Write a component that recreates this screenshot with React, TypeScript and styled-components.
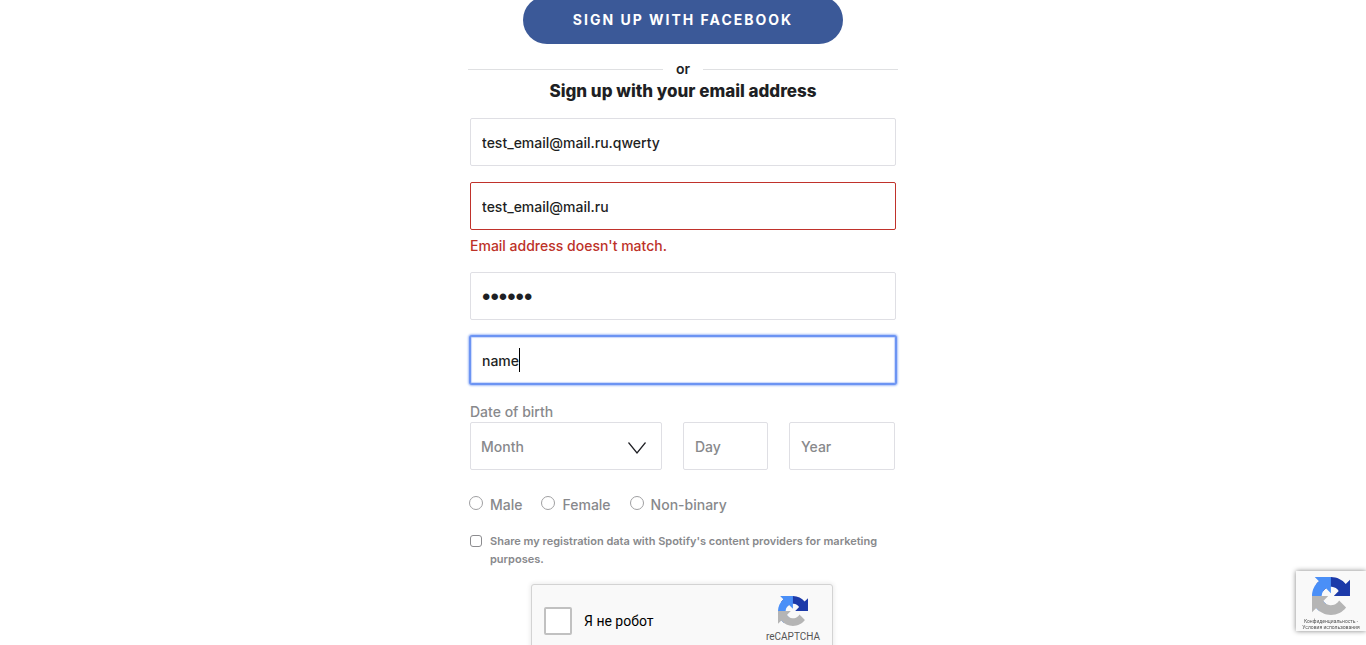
import React from "react";
import styled, { createGlobalStyle, css } from "styled-components";

const GlobalStyle = createGlobalStyle`
  *, *::before, *::after { box-sizing: border-box; }
  body {
    margin: 0;
    background: #fff;
    color: #1e1f24;
    font-family: Inter, "Noto Sans", sans-serif;
    font-size: 14px;
  }
`;

const Page = styled.main`
  display: flex;
  justify-content: center;
  height: 100vh;
  overflow: hidden;
`;

const Column = styled.div`
  display: flex;
  flex-direction: column;
  flex: 0 1 430px;
  margin-top: -4px;
`;

const FacebookButton = styled.button`
  align-self: center;
  flex: none;
  width: 320px;
  max-width: 100%;
  height: 48px;
  border: 0;
  border-radius: 24px;
  background: #3b5998;
  color: #fff;
  font: 700 14px/20px Inter, sans-serif;
  letter-spacing: 2px;
  text-transform: uppercase;
`;

const Divider = styled.div`
  display: flex;
  align-items: center;
  gap: 13px;
  margin-top: 15px;
  font: 600 14px/20px Inter, sans-serif;

  &::before, &::after {
    content: "";
    flex: 1;
    height: 1px;
    background: #dfe0e2;
  }
`;

const Title = styled.h1`
  margin: 0;
  font: 800 17px/24px Inter, sans-serif;
  text-align: center;
`;

const Form = styled.form`
  display: flex;
  flex-direction: column;
  gap: 16px;
  margin-top: 15px;
  padding: 0 2px;
`;

const box = css`
  width: 100%;
  height: 48px;
  border: 1px solid #dfdfe4;
  border-radius: 2px;
  background: #fff;
  padding: 0 11px;
  font: 500 14px/24px Inter, sans-serif;
  outline: 0;
`;

const Field = styled.div`
  position: relative;
`;

const TextInput = styled.input<{ $state?: "error" | "focused" }>`
  ${box}
  display: block;
  color: #1e1f24;

  &::placeholder { color: #88898c; opacity: 1; }

  &[type="password"] {
    padding-top: 2px;
    font-family: "Liberation Sans", sans-serif;
    font-size: 24px;
  }

  ${({ $state }) => $state === "error" && css`border-color: #c0322b;`}
  ${({ $state }) => $state === "focused" && css`
    border-color: #6c94f3;
    box-shadow: 0 0 0 1px #6c94f3, 0 0 2px 2px #a9c0f8, inset 0 0 1px 1px #c9d7fb;
  `}
`;

const Caret = styled.span`
  position: absolute;
  top: 12px;
  left: 49px;
  width: 1px;
  height: 24px;
  background: #000;
`;

const ErrorText = styled.p`
  margin: 4px 0 -2px;
  color: #bd3228;
  font: 500 14px/24px Inter, sans-serif;
`;

const DateGroup = styled.fieldset`
  margin: 3px 0 0;
  padding: 0;
  border: 0;
  min-width: 0;
`;

const Legend = styled.legend`
  padding: 0 0 1px;
  color: #88898c;
  font: 500 14px/18px Inter, sans-serif;
`;

const DateRow = styled.div`
  display: grid;
  grid-template-columns: 192fr 85fr 106fr;
  gap: 21px;
  padding-right: 1px;
`;

const MonthSelect = styled.select`
  ${box}
  appearance: none;
  padding: 2px 10px 0;
  color: #88898c;
`;

const Chevron = styled.svg`
  position: absolute;
  top: 20px;
  right: 16px;
  pointer-events: none;
`;

const RadioGroup = styled.div`
  display: flex;
  gap: 19px;
  margin: 8px 0 0 -1px;
`;

const ChoiceLabel = styled.label<{ $small?: boolean }>`
  display: flex;
  color: #88898c;
  font: 500 14px/22px Inter, sans-serif;
  gap: 7px;
  ${({ $small }) => $small && css`
    font-size: 11px;
    font-weight: 600;
    line-height: 18px;
    gap: 8px;
  `}
`;

const Radio = styled.input`
  appearance: none;
  flex: none;
  width: 14px;
  height: 14px;
  margin: 2px 0 0;
  border: 1px solid #a0a0a2;
  border-radius: 50%;
  background: #fff;
`;

const Checkbox = styled.input<{ $large?: boolean }>`
  appearance: none;
  flex: none;
  width: 12px;
  height: 12px;
  margin: 3px 0 0;
  border: 1px solid #8c8c8f;
  border-radius: 3px;
  background: #fff;
  ${({ $large }) => $large && css`
    width: 28px;
    height: 28px;
    margin: 0;
    border: 2px solid #c1c1c1;
    border-radius: 2px;
  `}
`;

const Captcha = styled.div`
  display: flex;
  align-items: flex-start;
  justify-content: space-between;
  align-self: center;
  width: 302px;
  height: 76px;
  margin-right: 2px;
  padding: 0 12px;
  border: 1px solid #d3d3d3;
  border-radius: 3px;
  background: #f9f9f9;
  box-shadow: 0 0 4px 1px rgba(0, 0, 0, 0.08);
`;

const RobotLabel = styled.label`
  display: flex;
  align-items: center;
  gap: 12px;
  margin-top: 22px;
  color: #000;
  font: 400 14px/17px Roboto, sans-serif;
`;

const CaptchaBrand = styled.div`
  display: flex;
  flex-direction: column;
  align-items: center;
  gap: 5px;
  margin-top: 11px;
  color: #555;
  font: 400 10px/12px Roboto, sans-serif;
`;

const Badge = styled.aside`
  position: fixed;
  right: 0;
  bottom: 14px;
  width: 70px;
  height: 60px;
  padding-top: 6px;
  display: flex;
  flex-direction: column;
  align-items: center;
  background: #f9f9f9;
  box-shadow: 0 0 5px gray;
`;

const BadgeLinks = styled.div`
  margin-top: 3px;
  color: #555;
  font: 400 5px/6px Roboto, sans-serif;
  text-align: center;
  white-space: nowrap;

  a { color: inherit; text-decoration: none; }
`;

function CaptchaLogo({ size }: { size: number }) {
  return (
    <svg width={size} height={size} viewBox="0 0 64 64" aria-hidden="true">
      <path fill="#1c3aa9" d="M64 31.955l-.033-1.37V4.687l-7.16 7.16C50.948 4.674 42.033.093 32.05.093c-10.4 0-19.622 4.96-25.458 12.64l11.736 11.86a15.55 15.55 0 0 1 4.754-5.334c2.05-1.6 4.952-2.906 8.968-2.906.485 0 .86.057 1.135.163 4.976.393 9.288 3.14 11.828 7.124l-8.307 8.307L64 31.953" />
      <path fill="#4a8ff7" d="M31.862.094l-1.37.033H4.594l7.16 7.16C4.58 13.147 0 22.06 0 32.046c0 10.4 4.96 19.622 12.64 25.458L24.5 45.768a15.55 15.55 0 0 1-5.334-4.754c-1.6-2.05-2.906-4.952-2.906-8.968 0-.485.057-.86.163-1.135.393-4.976 3.14-9.288 7.124-11.828l8.307 8.307L31.86.095" />
      <path fill="#b5b5b5" d="M.001 32.045l.033 1.37v25.898l7.16-7.16c5.86 7.173 14.774 11.754 24.76 11.754 10.4 0 19.622-4.96 25.458-12.64l-11.736-11.86a15.55 15.55 0 0 1-4.754 5.334c-2.05 1.6-4.952 2.906-8.968 2.906-.485 0-.86-.057-1.135-.163-4.976-.393-9.288-3.14-11.828-7.124l8.307-8.307c-10.522.04-22.4.066-27.295-.005" />
    </svg>
  );
}

export default function App() {
  return (
    <Page>
      <GlobalStyle />
      <Column>
        <FacebookButton type="button">Sign up with Facebook</FacebookButton>
        <Divider>or</Divider>
        <Title>Sign up with your email address</Title>
        <Form>
          <TextInput type="email" aria-label="Email" defaultValue="test_email@mail.ru.qwerty" />
          <Field>
            <TextInput
              type="email"
              aria-label="Confirm email"
              aria-invalid="true"
              aria-describedby="email-error"
              $state="error"
              defaultValue="test_email@mail.ru"
            />
            <ErrorText id="email-error">Email address doesn't match.</ErrorText>
          </Field>
          <TextInput type="password" aria-label="Password" defaultValue="qwerty" />
          <Field>
            <TextInput type="text" aria-label="What should we call you?" $state="focused" defaultValue="name" />
            <Caret />
          </Field>
          <DateGroup>
            <Legend>Date of birth</Legend>
            <DateRow>
              <Field>
                <MonthSelect aria-label="Month" defaultValue="">
                  <option value="">Month</option>
                </MonthSelect>
                <Chevron width="18" height="12" viewBox="0 0 18 12" fill="none" stroke="#1e1f24" strokeWidth="1.2">
                  <path d="M0.5 0.5L9 11L17.5 0.5" />
                </Chevron>
              </Field>
              <TextInput type="text" aria-label="Day" placeholder="Day" />
              <TextInput type="text" aria-label="Year" placeholder="Year" />
            </DateRow>
          </DateGroup>
          <RadioGroup role="radiogroup" aria-label="Gender">
            {["Male", "Female", "Non-binary"].map((name) => (
              <ChoiceLabel key={name}>
                <Radio type="radio" name="gender" value={name} />
                {name}
              </ChoiceLabel>
            ))}
          </RadioGroup>
          <ChoiceLabel $small>
            <Checkbox type="checkbox" />
            <span>Share my registration data with Spotify's content providers for marketing purposes.</span>
          </ChoiceLabel>
          <Captcha>
            <RobotLabel>
              <Checkbox type="checkbox" $large />
              Я не робот
            </RobotLabel>
            <CaptchaBrand>
              <CaptchaLogo size={30} />
              reCAPTCHA
            </CaptchaBrand>
          </Captcha>
        </Form>
      </Column>
      <Badge>
        <CaptchaLogo size={38} />
        <BadgeLinks>
          <a href="#privacy">Конфиденциальность</a> -<br />
          <a href="#terms">Условия использования</a>
        </BadgeLinks>
      </Badge>
    </Page>
  );
}
